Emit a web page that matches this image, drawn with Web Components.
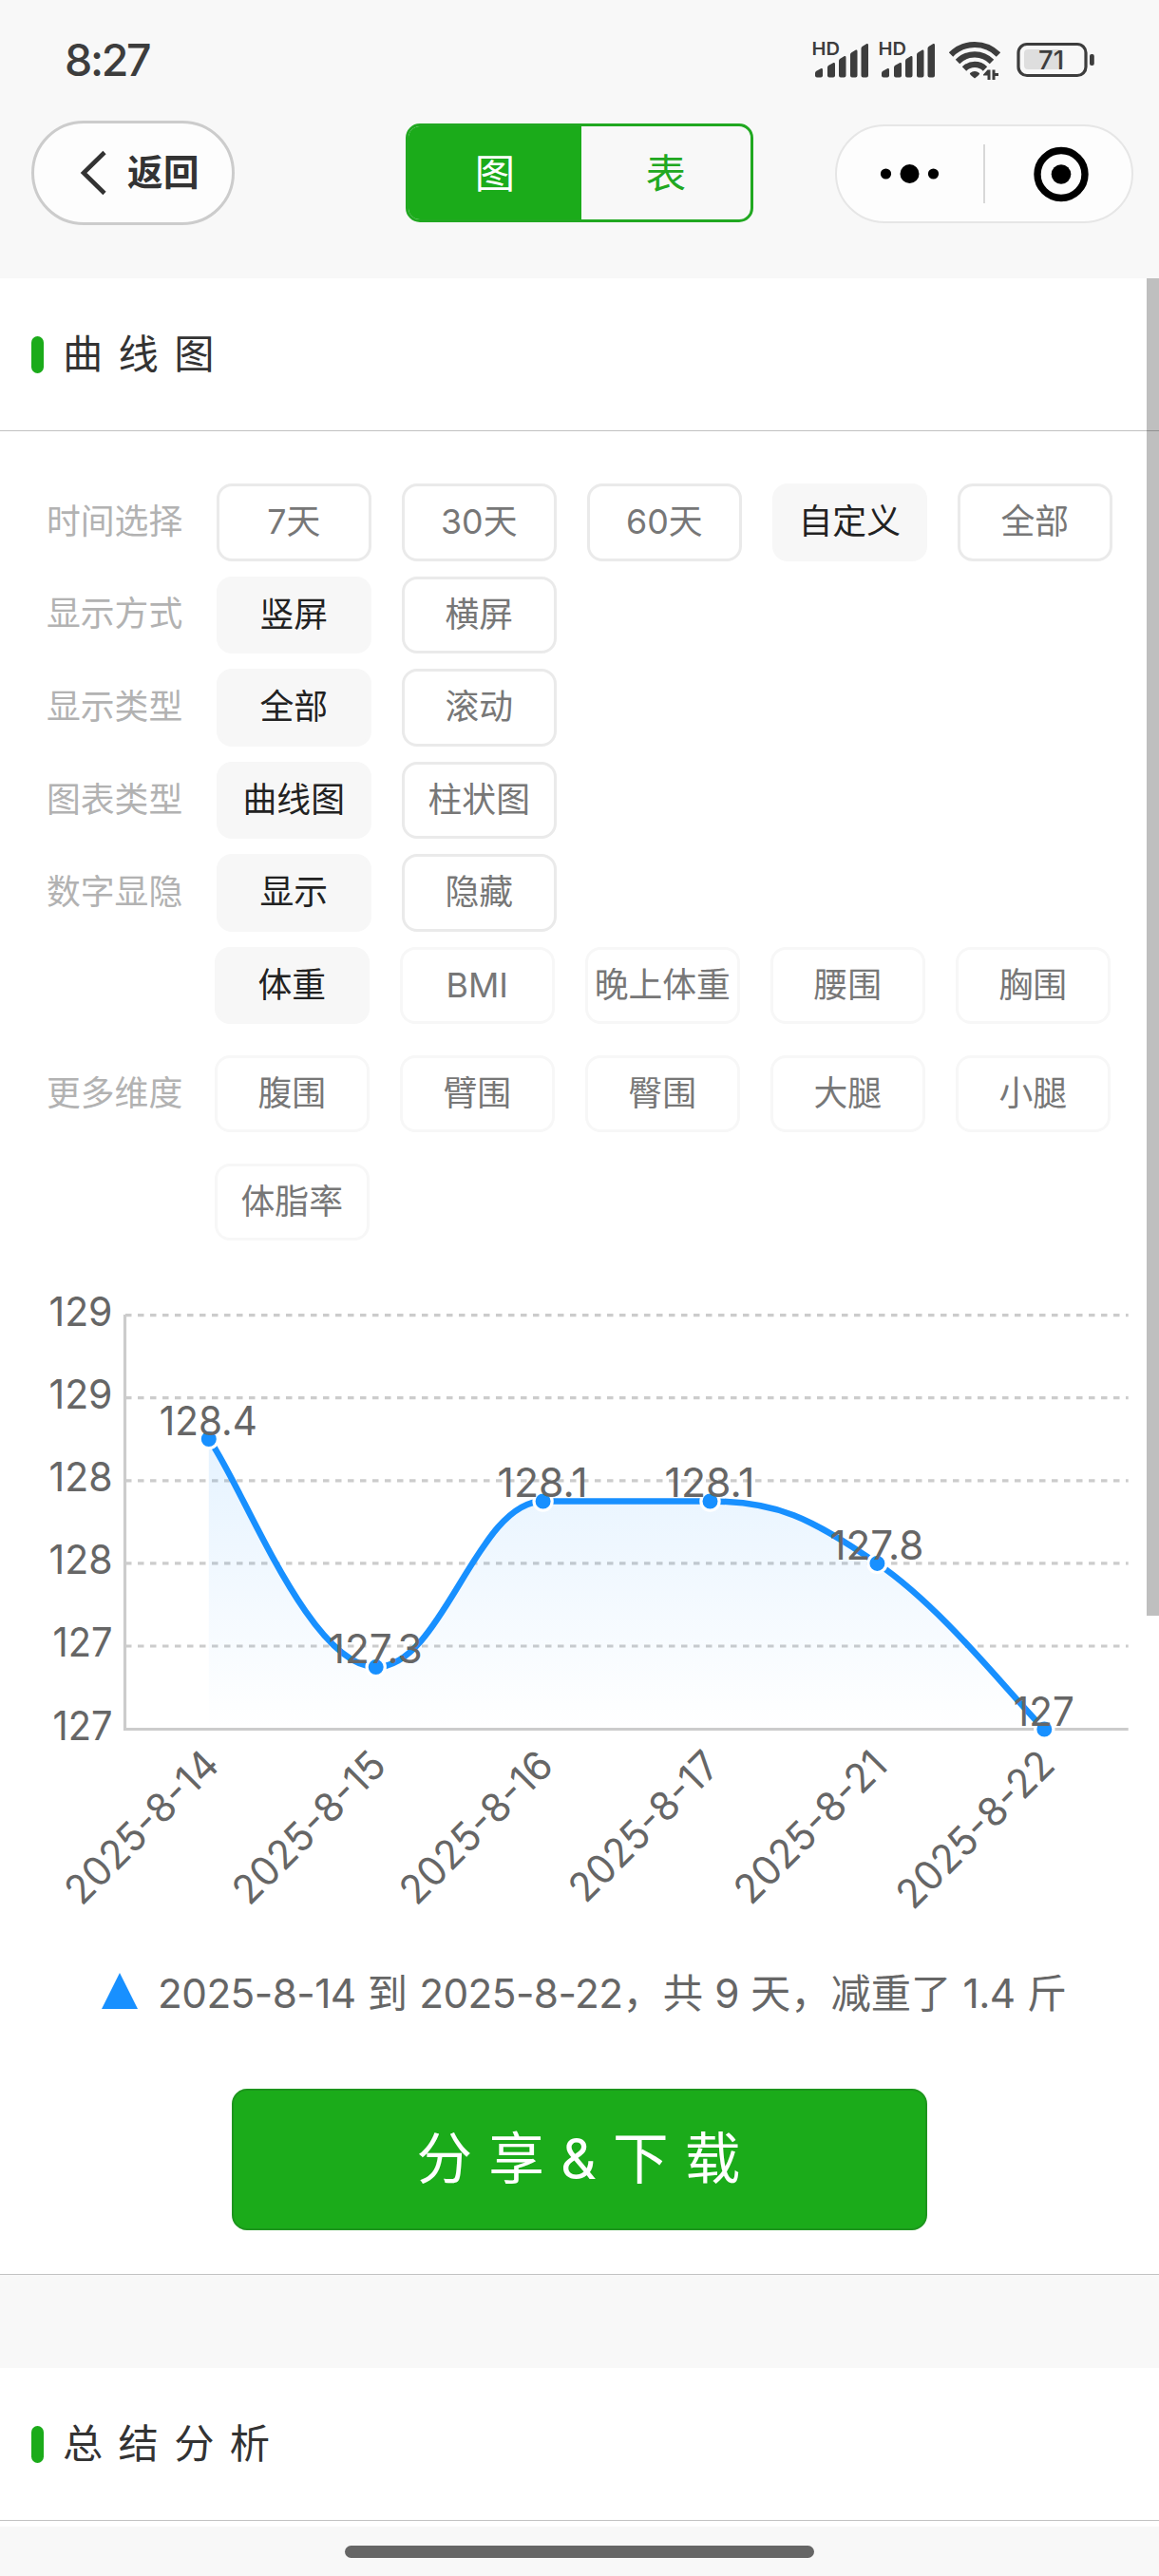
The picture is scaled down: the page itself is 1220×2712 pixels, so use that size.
<!DOCTYPE html>
<html lang="zh-CN">
<head>
<meta charset="utf-8">
<title>曲线图</title>
<style>
html,body{margin:0;padding:0}
body{width:1220px;height:2712px;overflow:hidden;background:#f8f8f8;font-family:Inter,"Noto Sans CJK SC",sans-serif}
</style>
</head>
<body>
<weight-page></weight-page>
<script>
const define = (name, html, setup) => {
  const tpl = document.createElement('template');
  tpl.innerHTML = html;
  customElements.define(name, class extends HTMLElement {
    constructor() {
      super();
      this.attachShadow({ mode: 'open' }).appendChild(tpl.content.cloneNode(true));
    }
    connectedCallback() { if (setup) setup(this, this.shadowRoot); }
  });
};

const bars = x => [[0,72,8],[13,66,8],[25,59,7.5],[37,52.5,7.5],[48.5,46,7.5]].map(([dx,y,w]) =>
  `<path d="M${x+dx} ${y+5}Q${x+dx} ${y+3.6} ${x+dx+1.4} ${y+2.8}L${x+dx+w-1.6} ${y}Q${x+dx+w} ${y-.4} ${x+dx+w} ${y+1.4}V79.5Q${x+dx+w} 81.5 ${x+dx+w-2} 81.5H${x+dx+2}Q${x+dx} 81.5 ${x+dx} 79.5Z"/>`).join('');

define('status-bar', `<style>
:host{display:flex;justify-content:space-between;height:120px;color:#3d3d3d}
.time{padding:35px 0 0 68px;font-size:46.5px;line-height:56px;font-weight:500;letter-spacing:-2.3px}
svg{display:block;font-family:Inter,sans-serif}
</style><span class="time">8:27</span>
<svg width="380" height="120" viewBox="840 0 380 120" fill="#3d3d3d">
<text x="854.500" y="58" font-size="19" font-weight="600" textLength="29.500" lengthAdjust="spacingAndGlyphs">HD</text>${bars(858)}
<text x="924.500" y="58" font-size="19" font-weight="600" textLength="29.500" lengthAdjust="spacingAndGlyphs">HD</text>${bars(928)}
<g fill="none" stroke="#3d3d3d" stroke-width="6.200"><path d="M1001 57.500A35 35 0 0 1 1051 57.500"/><path d="M1008 65A25 25 0 0 1 1044 65"/><path d="M1015 72.500A15.500 15.500 0 0 1 1037 72.500"/></g>
<path d="M1021 77Q1026 73 1031 77Q1032 78 1026 82.500Q1020 78 1021 77Z"/>
<path d="M1035 78.500L1039.500 73.500H1042.500V84H1039.500V79.500H1035ZM1044.500 73.500H1047.500V77H1051V80H1047.500V84H1044.500Z"/>
<rect x="1078" y="52" width="41" height="21" rx="4" fill="#dedede"/>
<rect x="1072" y="46.500" width="71" height="33" rx="9" fill="none" stroke="#3d3d3d" stroke-width="3.200"/>
<rect x="1147" y="57" width="4.800" height="12" rx="2"/>
<text x="1093" y="73" font-size="27.500" font-weight="500" textLength="27" lengthAdjust="spacingAndGlyphs">71</text>
</svg>`);

define('back-button', `<style>
:host{display:flex;align-items:center;box-sizing:border-box;width:214px;height:110px;border:3px solid #ccc;border-radius:55px;background:#fdfdfd;color:#333;padding-left:47px}
span{font-size:37.500px;font-weight:700;line-height:56px;padding-left:21px;letter-spacing:.5px}
</style><svg width="30" height="48" viewBox="0 0 30 48"><path d="M27 2.500L5 24L27 45.500" fill="none" stroke="#333" stroke-width="4.600"/></svg><span><slot></slot></span>`);

define('view-toggle', `<style>
:host{display:flex;box-sizing:border-box;width:366px;height:104px;border:3px solid #21a821;border-radius:15px;overflow:hidden;font-size:42.3px;line-height:99px;text-align:center;color:#21a821}
span{flex:1}
.on{background:#1bab1a;color:#fff;flex:0 0 182px}
</style><span class="on">图</span><span>表</span>`);

define('app-capsule', `<style>
:host{display:block;box-sizing:border-box;width:314px;height:104px;border:2px solid #e6e6e6;border-radius:52px;background:#fdfdfd}
svg{display:block}
</style><svg width="310" height="100" viewBox="881 133 310 100"><circle cx="932.500" cy="183" r="5.600"/><circle cx="957.500" cy="183" r="10"/><circle cx="982.500" cy="183" r="5.600"/><path d="M1036 152V214" stroke="#d8d8d8" stroke-width="2"/><circle cx="1117" cy="183.500" r="25" fill="none" stroke="#000" stroke-width="7.400"/><circle cx="1117" cy="183.500" r="10.300"/></svg>`);

define('nav-bar', `<style>
:host{display:flex;justify-content:space-between;box-sizing:border-box;height:173px;padding:7px 27px 0 33px}
view-toggle{margin-top:3px}app-capsule{margin-top:4px}
back-button{margin-right:94px}
</style><back-button>返回</back-button><view-toggle></view-toggle><app-capsule></app-capsule>`);

define('section-title', `<style>
:host{display:flex;align-items:center;box-sizing:border-box;height:161px;padding-left:33px;border-bottom:1.500px solid #c2c2c2;color:#333;background:#fff}
i{width:13px;height:39px;border-radius:6.500px;background:#1bab1a}
span{padding-left:20px;font-size:42.300px;line-height:60px;letter-spacing:16.300px}
</style><i></i><span><slot></slot></span>`);

define('option-chip', `<style>
:host{display:block;box-sizing:border-box;width:162.500px;height:81.500px;border:3px solid var(--edge,#eaeaea);border-radius:16px;font-size:35.800px;line-height:75px;text-align:center;white-space:nowrap;color:#777}
:host([on]){background:#f7f7f7;border-color:#f7f7f7;color:#222}
</style><slot></slot>`);

define('option-row', `<style>
:host{display:flex;align-items:center;margin-bottom:16.100px}
b{font-weight:400;flex:none;width:178px;padding-left:49px;margin-right:1px;font-size:35.800px;line-height:78px;color:#b2b2b2;margin-top:-2px}
div{display:flex;flex-wrap:wrap;gap:32.300px 32.500px}
:host([wide]) b{width:176px}
:host([wide]){--edge:#f7f7f7}
</style><b></b><div></div>`, (el, root) => {
  root.querySelector('b').textContent = el.getAttribute('label');
  const on = el.getAttribute('selected');
  for (const t of el.getAttribute('options').split(' ')) {
    const c = document.createElement('option-chip');
    c.textContent = t;
    if (t === on) c.setAttribute('on', '');
    root.querySelector('div').append(c);
  }
});

define('curve-chart', `<style>:host{display:block}svg{display:block;font-family:Inter,sans-serif}</style><svg width="1207" height="700" viewBox="0 1340 1207 700" font-size="42.300" fill="#666"></svg>`, (el, root) => {
  const data = [[128.4,100],[127.3,96],[128.1,92],[128.1,92],[127.8,96],[127,61]];
  const p = data.map(([v], i) => [219.8 + i * 175.9, 1820.5 - (v - 127) * 218.2]);
  const peak = i => i > 0 && i < p.length - 1 &&
    (p[i][1] >= Math.max(p[i-1][1], p[i+1][1]) || p[i][1] <= Math.min(p[i-1][1], p[i+1][1]));
  let d = `M${p[0]}`;
  for (let i = 0; i < p.length - 1; i++) {
    const prev = p[Math.max(0, i-1)], next = p[Math.min(p.length-1, i+2)];
    const a = [p[i][0] + (p[i+1][0] - prev[0]) * .2, p[i][1] + (p[i+1][1] - prev[1]) * .2];
    const b = [p[i+1][0] - (next[0] - p[i][0]) * .2, p[i+1][1] - (next[1] - p[i][1]) * .2];
    if (peak(i)) a[1] = p[i][1];
    if (peak(i+1)) b[1] = p[i+1][1];
    d += `C${a} ${b} ${p[i+1]}`;
  }
  let s = `<defs><linearGradient id="g" gradientUnits="userSpaceOnUse" x1="0" y1="1384" x2="0" y2="1820"><stop stop-color="#1890ff" stop-opacity=".16"/><stop offset="1" stop-color="#1890ff" stop-opacity="0"/></linearGradient></defs>`;
  ['129','129','128','128','127','127'].forEach((t, i) => {
    const y = 1384.6 + i * 87.1;
    const w = t === '127' ? 63 : 67;
    s += `<text x="${118.5 - w}" y="${y + 11.4}" textLength="${w}" lengthAdjust="spacingAndGlyphs">${t}</text>`;
    if (i < 5) s += `<path d="M132 ${y}H1187.700" stroke="#ccc" stroke-width="3.200" stroke-dasharray="6.500 6.500"/>`;
  });
  s += `<path d="M131.500 1384V1820.500H1187.700" fill="none" stroke="#ccc" stroke-width="3.200"/>`;
  s += `<path d="${d}V1820.500H${p[0][0]}Z" fill="url(#g)"/><path d="${d}" fill="none" stroke="#1890ff" stroke-width="6.500"/>`;
  p.forEach(q => s += `<circle cx="${q[0]}" cy="${q[1]}" r="9.600" fill="#1890ff" stroke="#fff" stroke-width="3.200"/>`);
  p.forEach((q, i) => s += `<text x="${q[0] - data[i][1]/2 - 2}" y="${q[1] - 4}" textLength="${data[i][1] + 3}" lengthAdjust="spacingAndGlyphs">${data[i][0]}</text>`);
  [['2025-8-14',88,2006.5,201],['2025-8-15',264.5,2006.5,200],['2025-8-16',440.4,2006.5,200],['2025-8-17',618.6,2004,196],['2025-8-21',792.4,2006,199.5],['2025-8-22',963.2,2011,207]].forEach(([t,x,y,l]) =>
    s += `<text transform="translate(${x-2} ${y+1}) rotate(-45)" textLength="${l+7}" lengthAdjust="spacingAndGlyphs">${t}</text>`);
  root.querySelector('svg').innerHTML = s;
});

define('chart-caption', `<style>
:host{display:flex;align-items:center;height:62px;padding-left:107px;font-size:42.300px;line-height:62px;color:#666;white-space:pre}
i{width:0;height:0;border:solid transparent;border-width:0 19px 38px;border-bottom-color:#1890ff;margin-right:21px;margin-top:-7px}
span{word-spacing:.2px}
.n{letter-spacing:-.55px}
</style><i></i><span><span class="n">2025-8-14</span> 到 <span class="n">2025-8-22</span>，共 <span class="n">9</span> 天，减重了 <span class="n">1.4</span> 斤</span>`);

define('share-button', `<style>
:host{display:block;box-sizing:border-box;width:732px;height:149px;border:2px solid #1d951d;border-radius:16px;background:#1bab1a;color:#fff;text-align:center;font-size:58.600px;line-height:143px;letter-spacing:17.200px;text-indent:15px}
</style><slot></slot>`);

define('home-indicator', `<style>
:host{position:absolute;left:0;right:0;bottom:0;height:52px;background:#f8f8f8;display:flex;justify-content:center;align-items:flex-start}
i{width:494px;height:13px;border-radius:6.500px;background:#666;margin-top:20px}
</style><i></i>`);

define('scroll-thumb', `<style>:host{position:absolute;right:0;top:293px;width:13px;height:1408px;background:rgba(0,0,0,.25)}</style>`);

define('weight-page', `<style>
:host{display:block;position:relative;height:2712px;overflow:hidden;background:#f8f8f8}
.card{background:#fff;height:2101px;border-bottom:1.500px solid #c2c2c2}
.options{padding-top:55px;height:831px;box-sizing:border-box}
curve-chart{margin-top:55px}
chart-caption{margin-top:28px}
share-button{margin:69px 0 0 244px}
.next{background:#fff;margin-top:98px;height:220px}
</style>
<status-bar></status-bar><nav-bar></nav-bar>
<div class="card"><section-title>曲线图</section-title>
<div class="options">
<option-row label="时间选择" options="7天 30天 60天 自定义 全部" selected="自定义"></option-row>
<option-row label="显示方式" options="竖屏 横屏" selected="竖屏"></option-row>
<option-row label="显示类型" options="全部 滚动" selected="全部"></option-row>
<option-row label="图表类型" options="曲线图 柱状图" selected="曲线图"></option-row>
<option-row label="数字显隐" options="显示 隐藏" selected="显示"></option-row>
<option-row wide label="更多维度" options="体重 BMI 晚上体重 腰围 胸围 腹围 臂围 臀围 大腿 小腿 体脂率" selected="体重"></option-row>
</div>
<curve-chart></curve-chart><chart-caption></chart-caption><share-button>分享&amp;下载</share-button></div>
<div class="next"><section-title>总结分析</section-title></div>
<home-indicator></home-indicator><scroll-thumb></scroll-thumb>`);
</script>
</body>
</html>
